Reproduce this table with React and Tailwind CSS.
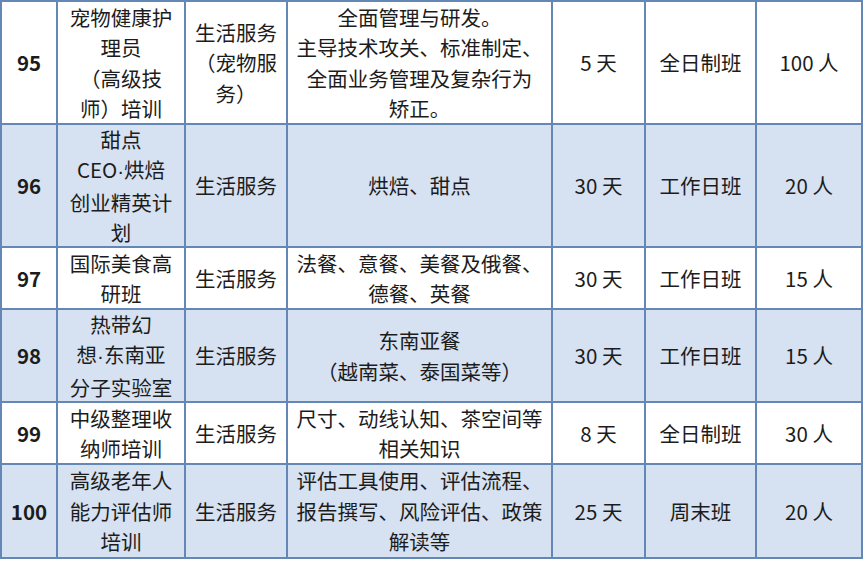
import React from "react";

const Dot = () => <span className="font-['Liberation_Sans',sans-serif]">·</span>;
// full-width bracket, kept one em wide
const P = ({ c }) => <span className="inline-block w-[1em] text-center">{c}</span>;

const rows = [
  {
    no: "95",
    h: "h-[121px]",
    fill: false,
    name: ["宠物健康护", "理员", <><P c="（" />高级技</>, <>师<P c="）" />培训</>],
    cat: ["生活服务", <><P c="（" />宠物服</>, <>务<P c="）" /></>],
    content: ["全面管理与研发。", "主导技术攻关、标准制定、", "全面业务管理及复杂行为", "矫正。"],
    days: "5 天",
    mode: "全日制班",
    people: "100 人",
  },
  {
    no: "96",
    h: "h-[121px]",
    fill: true,
    name: ["甜点", <>CEO<Dot />烘焙</>, "创业精英计", "划"],
    cat: ["生活服务"],
    content: ["烘焙、甜点"],
    days: "30 天",
    mode: "工作日班",
    people: "20 人",
  },
  {
    no: "97",
    h: "h-[60px]",
    fill: false,
    name: ["国际美食高", "研班"],
    cat: ["生活服务"],
    content: ["法餐、意餐、美餐及俄餐、", "德餐、英餐"],
    days: "30 天",
    mode: "工作日班",
    people: "15 人",
  },
  {
    no: "98",
    h: "h-[91px]",
    fill: true,
    name: ["热带幻", <>想<Dot />东南亚</>, "分子实验室"],
    cat: ["生活服务"],
    content: ["东南亚餐", <><P c="（" />越南菜、泰国菜等<P c="）" /></>],
    days: "30 天",
    mode: "工作日班",
    people: "15 人",
  },
  {
    no: "99",
    h: "h-[60px]",
    fill: false,
    name: ["中级整理收", "纳师培训"],
    cat: ["生活服务"],
    content: ["尺寸、动线认知、茶空间等", "相关知识"],
    days: "8 天",
    mode: "全日制班",
    people: "30 人",
  },
  {
    no: "100",
    h: "h-[92px]",
    fill: true,
    name: ["高级老年人", "能力评估师", "培训"],
    cat: ["生活服务"],
    content: ["评估工具使用、评估流程、", "报告撰写、风险评估、政策", "解读等"],
    days: "25 天",
    mode: "周末班",
    people: "20 人",
  },
];

const Cell = ({ w, lines, bold, fill, h }) => (
  <div
    className={`${w} ${h} shrink-0 border-r-2 border-[#6488b6] flex flex-col items-center justify-center text-center ${
      fill ? "bg-[#d6e1f1]" : "bg-white"
    } ${bold ? "font-bold" : ""}`}
  >
    {lines.map((l, i) => (
      <div key={i} className="whitespace-nowrap leading-[30.5px]">
        {l}
      </div>
    ))}
  </div>
);

export default function App() {
  return (
    <div className="w-[864px] h-[584px] bg-white overflow-hidden font-['Noto_Sans_CJK_SC',sans-serif] text-[20.5px] text-[#1c1c1c]">
      <div className="w-[863px] border-l-2 border-t-2 border-[#6488b6]">
        {rows.map((r) => (
          <div key={r.no} className="flex border-b-2 border-[#6488b6]">
            <Cell w="w-[56px]" h={r.h} lines={[r.no]} bold fill={r.fill} />
            <Cell w="w-[128px]" h={r.h} lines={r.name} fill={r.fill} />
            <Cell w="w-[102px]" h={r.h} lines={r.cat} fill={r.fill} />
            <Cell w="w-[265px]" h={r.h} lines={r.content} fill={r.fill} />
            <Cell w="w-[93px]" h={r.h} lines={[r.days]} fill={r.fill} />
            <Cell w="w-[111px]" h={r.h} lines={[r.mode]} fill={r.fill} />
            <Cell w="w-[106px]" h={r.h} lines={[r.people]} fill={r.fill} />
          </div>
        ))}
      </div>
    </div>
  );
}
